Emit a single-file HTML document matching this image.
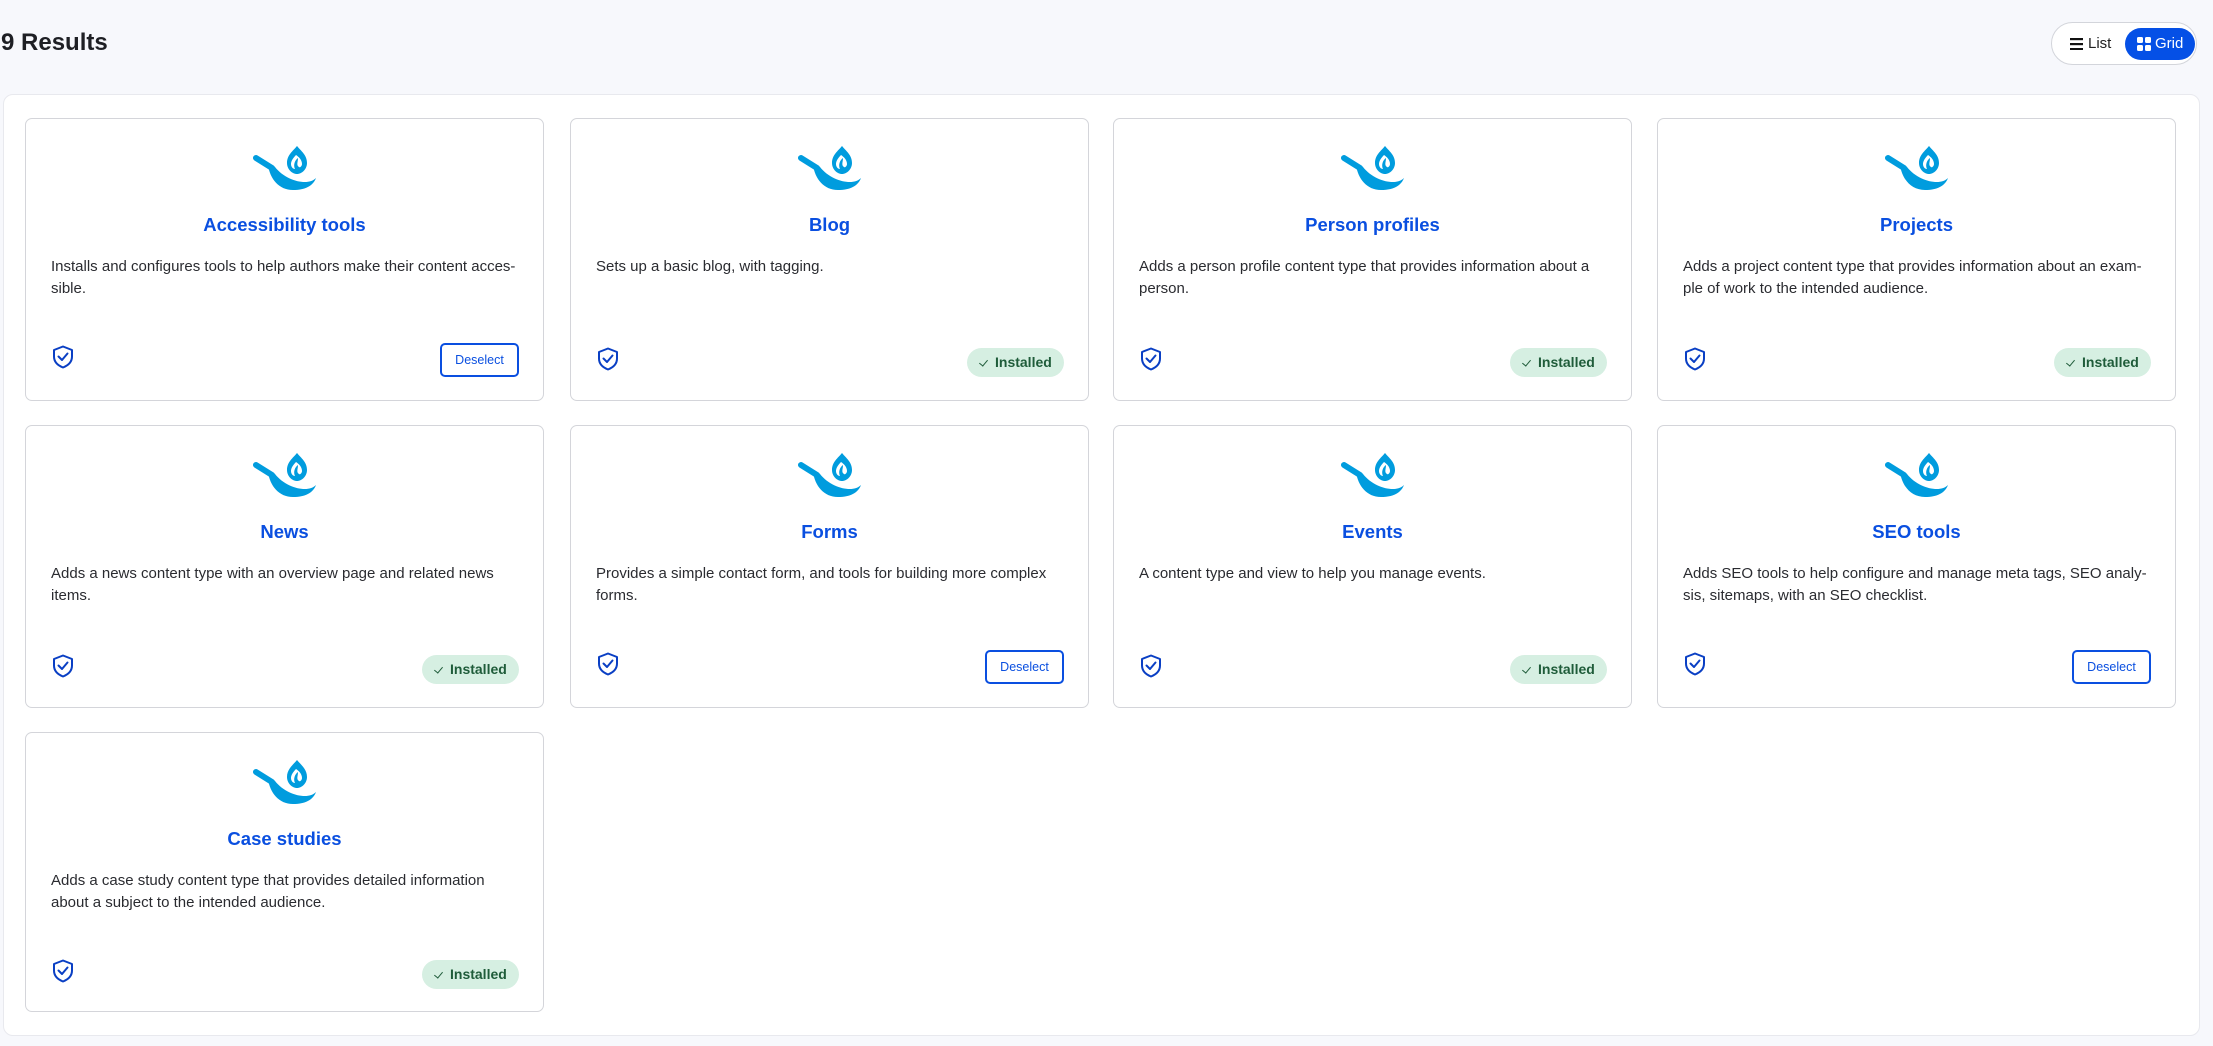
<!DOCTYPE html>
<html><head><meta charset="utf-8"><style>
*{box-sizing:border-box;margin:0;padding:0}
body{width:2213px;height:1046px;background:#f7f8fc;font-family:"Liberation Sans",Arial,sans-serif;position:relative;overflow:hidden;color:#232429}
h1{position:absolute;left:1px;top:29px;font-size:24px;font-weight:bold;color:#1e1f24}
.toggle{position:absolute;left:2051px;top:22px;width:146px;height:43px;border:1px solid #d3d5db;border-radius:22px;background:#fff}
.toggle .list{position:absolute;left:18px;top:12px;font-size:15px;color:#222}
.toggle .grid{position:absolute;left:73px;top:5px;width:70px;height:32px;border-radius:16px;background:#0550e6;color:#fff;font-size:15px;padding:7px 0 0 30px}
.wrap{position:absolute;left:3px;top:94px;width:2197px;height:942px;background:#fff;border:1px solid #e8e9ee;border-radius:10px}
.card{position:absolute;width:519px;height:283px;border:1px solid #d4d5da;border-radius:7px;background:#fff}
.card svg.pan{position:absolute;left:227px;top:24px}
.card h2{position:absolute;left:0;right:0;top:95px;text-align:center;font-size:18.5px;font-weight:bold;color:#0a4fe0}
.card p{position:absolute;left:25px;top:137px;width:480px;font-size:15px;line-height:22px;color:#2a2b30}
.card .sh{position:absolute;left:26px;top:226px}
.des{position:absolute;right:24px;top:224px;width:79px;height:34px;border:2px solid #0a4fe0;border-radius:5px;color:#0a4fe0;font-size:12.5px;text-align:center;line-height:30px}
.ins{position:absolute;right:24px;top:229px;width:97px;height:29px;border-radius:15px;background:#d6efe2;color:#1f5c3a;font-size:14px;line-height:29px;padding-left:28px;font-weight:bold}
.ins:before{content:"";position:absolute;left:14px;top:10px;width:4px;height:7px;border:solid #1f5c3a;border-width:0 1.6px 1.6px 0;transform:rotate(40deg)}
</style></head><body>
<h1>9 Results</h1>
<div class="toggle">
<svg style="position:absolute;left:18px;top:15px" width="13" height="12"><rect y="0" width="13" height="2.2" fill="#111"/><rect y="5" width="13" height="2.2" fill="#111"/><rect y="10" width="13" height="2.2" fill="#111"/></svg>
<span class="list" style="left:36px">List</span>
<div class="grid"><svg style="position:absolute;left:12px;top:9px" width="14" height="14"><rect width="6" height="6" rx="1.5" fill="#fff"/><rect x="8" width="6" height="6" rx="1.5" fill="#fff"/><rect y="8" width="6" height="6" rx="1.5" fill="#fff"/><rect x="8" y="8" width="6" height="6" rx="1.5" fill="#fff"/></svg>Grid</div>
</div>
<div class="wrap"></div>
<svg width="0" height="0" style="position:absolute"><defs>
<symbol id="pan" viewBox="0 0 65 49">
<path d="M3 15 L19 25" stroke="#009cde" stroke-width="6" stroke-linecap="round"/>
<path d="M15 22 C17 36 26 47 40 47 C52 47 60 43 63 35 C60 38 56 39 52 39 C42 39 30 34 22 24 Z" fill="#009cde"/>
<path d="M44 3 C48 8 54 12 54 20 C54 26 49 31 44 31 C39 31 34 26 34 20 C34 12 40 8 44 3 Z" fill="#009cde"/>
<path d="M43 12 C39 16 38 19 38 21 C38 24 40 26 42 26 C40 22 42 17 45 15 C45 19 43 22 46 24 C47 25 49 23 49 21 C49 17 46 14 43 12 Z" fill="#fff"/>
</symbol>
<symbol id="sh" viewBox="0 0 22 24">
<path d="M11 1.5 L20 5 V11.5 C20 17 16 20.5 11 22.5 C6 20.5 2 17 2 11.5 V5 Z" fill="none" stroke="#0a3fc4" stroke-width="2" stroke-linejoin="round"/>
<path d="M6.5 11.5 L10 15 L15.5 8.5" fill="none" stroke="#0a3fc4" stroke-width="2" stroke-linecap="round" stroke-linejoin="round"/>
</symbol></defs></svg>

<div class="card" style="left:25px;top:118px"><svg class="pan" width="65" height="49"><use href="#pan"/></svg><h2>Accessibility tools</h2><p>Installs and configures tools to help authors make their content acces-<br>sible.</p><svg class="sh" width="22" height="24"><use href="#sh"/></svg><div class="des">Deselect</div></div>
<div class="card" style="left:570px;top:118px"><svg class="pan" width="65" height="49"><use href="#pan"/></svg><h2>Blog</h2><p>Sets up a basic blog, with tagging.</p><svg class="sh" width="22" height="24" style="top:228px"><use href="#sh"/></svg><div class="ins">Installed</div></div>
<div class="card" style="left:1113px;top:118px"><svg class="pan" width="65" height="49"><use href="#pan"/></svg><h2>Person profiles</h2><p>Adds a person profile content type that provides information about a<br>person.</p><svg class="sh" width="22" height="24" style="top:228px"><use href="#sh"/></svg><div class="ins">Installed</div></div>
<div class="card" style="left:1657px;top:118px"><svg class="pan" width="65" height="49"><use href="#pan"/></svg><h2>Projects</h2><p>Adds a project content type that provides information about an exam-<br>ple of work to the intended audience.</p><svg class="sh" width="22" height="24" style="top:228px"><use href="#sh"/></svg><div class="ins">Installed</div></div>

<div class="card" style="left:25px;top:425px"><svg class="pan" width="65" height="49"><use href="#pan"/></svg><h2>News</h2><p>Adds a news content type with an overview page and related news<br>items.</p><svg class="sh" width="22" height="24" style="top:228px"><use href="#sh"/></svg><div class="ins">Installed</div></div>
<div class="card" style="left:570px;top:425px"><svg class="pan" width="65" height="49"><use href="#pan"/></svg><h2>Forms</h2><p>Provides a simple contact form, and tools for building more complex<br>forms.</p><svg class="sh" width="22" height="24"><use href="#sh"/></svg><div class="des">Deselect</div></div>
<div class="card" style="left:1113px;top:425px"><svg class="pan" width="65" height="49"><use href="#pan"/></svg><h2>Events</h2><p>A content type and view to help you manage events.</p><svg class="sh" width="22" height="24" style="top:228px"><use href="#sh"/></svg><div class="ins">Installed</div></div>
<div class="card" style="left:1657px;top:425px"><svg class="pan" width="65" height="49"><use href="#pan"/></svg><h2>SEO tools</h2><p>Adds SEO tools to help configure and manage meta tags, SEO analy-<br>sis, sitemaps, with an SEO checklist.</p><svg class="sh" width="22" height="24"><use href="#sh"/></svg><div class="des">Deselect</div></div>

<div class="card" style="left:25px;top:732px;height:280px"><svg class="pan" width="65" height="49"><use href="#pan"/></svg><h2>Case studies</h2><p>Adds a case study content type that provides detailed information<br>about a subject to the intended audience.</p><svg class="sh" width="22" height="24" style="top:226px"><use href="#sh"/></svg><div class="ins" style="top:227px">Installed</div></div>
</body></html>
